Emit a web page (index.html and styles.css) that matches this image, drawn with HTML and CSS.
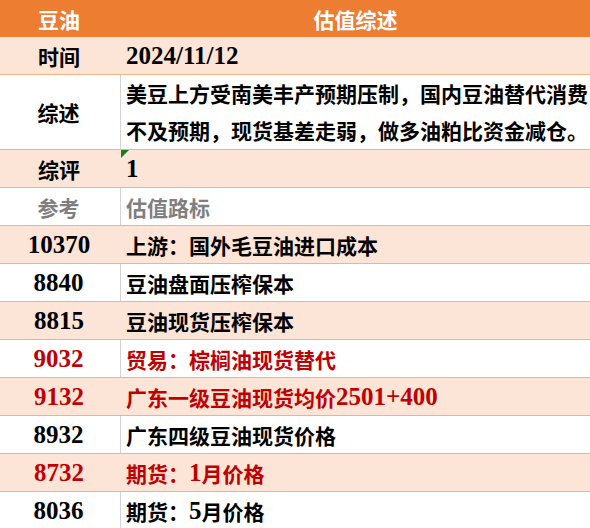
FILE: index.html
```html
<!DOCTYPE html>
<html lang="zh">
<head>
<meta charset="utf-8">
<link rel="stylesheet" href="styles.css">
</head>
<body>
<div class="sheet">
  <div class="row head"><div class="c1">豆油</div><div class="c2 center">估值综述</div></div>
  <div class="row peach"><div class="c1">时间</div><div class="c2"><span class="n">2024/11/12</span></div></div>
  <div class="row white tall"><div class="c1">综述</div><div class="c2 wrap">美豆上方受南美丰产预期压制，国内豆油替代消费<br>不及预期，现货基差走弱，做多油粕比资金减仓。</div></div>
  <div class="row peach"><div class="c1">综评</div><div class="c2 note"><span class="n">1</span></div></div>
  <div class="row white grey"><div class="c1">参考</div><div class="c2">估值路标</div></div>
  <div class="row peach"><div class="c1"><span class="n">10370</span></div><div class="c2">上游：国外毛豆油进口成本</div></div>
  <div class="row white"><div class="c1"><span class="n">8840</span></div><div class="c2">豆油盘面压榨保本</div></div>
  <div class="row peach"><div class="c1"><span class="n">8815</span></div><div class="c2">豆油现货压榨保本</div></div>
  <div class="row white red"><div class="c1"><span class="n">9032</span></div><div class="c2">贸易：棕榈油现货替代</div></div>
  <div class="row peach red"><div class="c1"><span class="n">9132</span></div><div class="c2">广东一级豆油现货均价<span class="n">2501+400</span></div></div>
  <div class="row white"><div class="c1"><span class="n">8932</span></div><div class="c2">广东四级豆油现货价格</div></div>
  <div class="row peach red"><div class="c1"><span class="n">8732</span></div><div class="c2">期货：<span class="n">1</span>月价格</div></div>
  <div class="row white"><div class="c1"><span class="n">8036</span></div><div class="c2">期货：<span class="n">5</span>月价格</div></div>
</div>
</body>
</html>
```

FILE: styles.css
```css
html, body {
  margin: 0;
  padding: 0;
  background: #ffffff;
}
.sheet {
  width: 590px;
  height: 528px;
  overflow: hidden;
  font-family: "Noto Sans CJK SC", "Noto Sans", sans-serif;
  font-weight: 700;
  font-size: 21px;
  color: #000000;
}
.row {
  display: flex;
  height: 38px;
  box-sizing: border-box;
  border-bottom: 1px solid #f4b183;
}
.row.head {
  height: 37px;
  background: #ed7d31;
  color: #ffffff;
  border-bottom: none;
}
.row.peach {
  background: #fce4d6;
}
.row.white {
  background: #ffffff;
}
.row.tall {
  height: 75px;
}
.c1 {
  width: 121px;
  flex: none;
  box-sizing: border-box;
  display: flex;
  align-items: center;
  justify-content: center;
  padding-right: 3px;
}
.row.white .c1 {
  border-right: 1px solid #d4d4d4;
}
.c2 {
  flex: 1;
  display: flex;
  align-items: center;
  padding-left: 5px;
  white-space: nowrap;
  position: relative;
}
.c2.center {
  justify-content: center;
  padding-left: 0;
}
.c2.wrap {
  line-height: 37px;
  padding-top: 0;
  display: block;
  padding-top: 0;
}
.n {
  font-family: "Liberation Serif", "DejaVu Serif", serif;
  font-size: 25px;
  font-weight: 700;
}
.row.grey {
  color: #7f7f7f;
}
.row.red {
  color: #c00000;
}
.c2.note::before {
  content: "";
  position: absolute;
  left: 0;
  top: 0;
  width: 0;
  height: 0;
  border-top: 8px solid #1f7a1f;
  border-right: 8px solid transparent;
}
```
